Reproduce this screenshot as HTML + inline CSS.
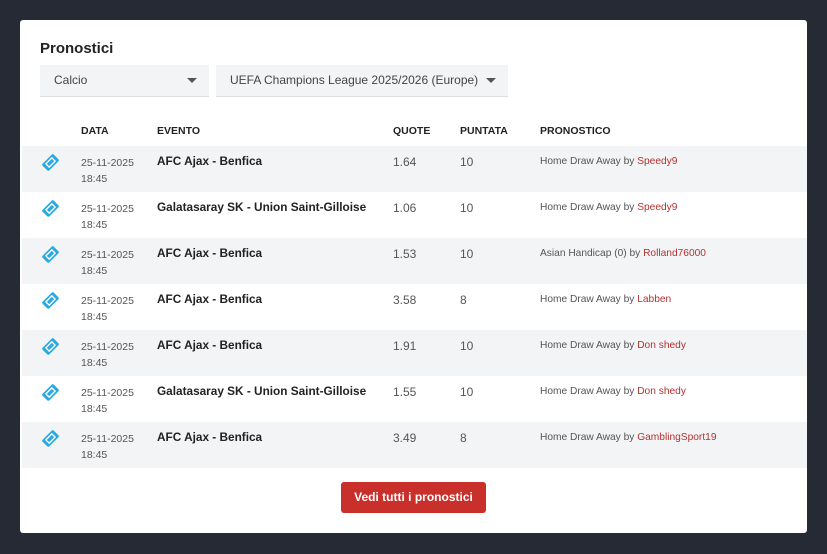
<!DOCTYPE html>
<html><head><meta charset="utf-8"><style>
*{box-sizing:border-box;margin:0;padding:0}
body{width:827px;height:554px;background:#262a34;font-family:"Liberation Sans",sans-serif;position:relative;overflow:hidden}
.card{position:absolute;left:20px;top:20px;width:787px;height:513px;background:#fff;border-radius:3px}
h2{position:absolute;left:20px;top:20px;font-size:15px;font-weight:bold;color:#222}
.sel{position:absolute;top:45px;height:32px;background:#f3f4f6;border-bottom:1px solid #dcdde0;font-size:12px;color:#444;line-height:31px;padding-left:14px}
.sel:after{content:"";position:absolute;right:12px;top:13px;border-left:5px solid transparent;border-right:5px solid transparent;border-top:5px solid #555}
.th{position:absolute;top:105px;font-size:10.5px;font-weight:bold;color:#222}
.row{position:absolute;left:2px;width:785px;height:46px}
.row.g{background:#f3f4f6}
.row div{position:absolute}
.ic{left:18px;top:6px}
.dt{left:59px;top:9px;font-size:10.5px;color:#555;line-height:16px}
.ev{left:135px;top:8px;font-size:11.8px;font-weight:bold;color:#222}
.q{left:371px;top:9px;font-size:12px;color:#555}
.p{left:438px;top:9px;font-size:12px;color:#555}
.pr{left:518px;top:10px;font-size:10.2px;color:#555}
.pr span{color:#b3322f}
.btn{position:absolute;left:321px;top:462px;width:145px;height:31px;background:#c9302c;border-radius:3px;color:#fff;font-weight:bold;font-size:12px;text-align:center;line-height:31px}
</style></head><body>
<svg width="0" height="0" style="position:absolute"><defs><symbol id="t" viewBox="0 0 20 20"><g transform="rotate(-45 10 10)"><rect x="2.5" y="5.5" width="15" height="9" rx="1.5" fill="#2aa8e0"/><rect x="6" y="7.8" width="8" height="4.4" fill="none" stroke="#fff" stroke-width="1.3"/></g></symbol></defs></svg>
<div class="card">
<h2>Pronostici</h2>
<div class="sel" style="left:20px;width:169px">Calcio</div>
<div class="sel" style="left:196px;width:292px">UEFA Champions League 2025/2026 (Europe)</div>
<div class="th" style="left:61px">DATA</div>
<div class="th" style="left:137px">EVENTO</div>
<div class="th" style="left:373px">QUOTE</div>
<div class="th" style="left:440px">PUNTATA</div>
<div class="th" style="left:520px">PRONOSTICO</div>

<div class="row g" style="top:126px"><div class="ic"><svg width="21" height="21"><use href="#t"/></svg></div><div class="dt">25-11-2025<br>18:45</div><div class="ev">AFC Ajax - Benfica</div><div class="q">1.64</div><div class="p">10</div><div class="pr">Home Draw Away by <span>Speedy9</span></div></div>
<div class="row" style="top:172px"><div class="ic"><svg width="21" height="21"><use href="#t"/></svg></div><div class="dt">25-11-2025<br>18:45</div><div class="ev">Galatasaray SK - Union Saint-Gilloise</div><div class="q">1.06</div><div class="p">10</div><div class="pr">Home Draw Away by <span>Speedy9</span></div></div>
<div class="row g" style="top:218px"><div class="ic"><svg width="21" height="21"><use href="#t"/></svg></div><div class="dt">25-11-2025<br>18:45</div><div class="ev">AFC Ajax - Benfica</div><div class="q">1.53</div><div class="p">10</div><div class="pr">Asian Handicap (0) by <span>Rolland76000</span></div></div>
<div class="row" style="top:264px"><div class="ic"><svg width="21" height="21"><use href="#t"/></svg></div><div class="dt">25-11-2025<br>18:45</div><div class="ev">AFC Ajax - Benfica</div><div class="q">3.58</div><div class="p">8</div><div class="pr">Home Draw Away by <span>Labben</span></div></div>
<div class="row g" style="top:310px"><div class="ic"><svg width="21" height="21"><use href="#t"/></svg></div><div class="dt">25-11-2025<br>18:45</div><div class="ev">AFC Ajax - Benfica</div><div class="q">1.91</div><div class="p">10</div><div class="pr">Home Draw Away by <span>Don shedy</span></div></div>
<div class="row" style="top:356px"><div class="ic"><svg width="21" height="21"><use href="#t"/></svg></div><div class="dt">25-11-2025<br>18:45</div><div class="ev">Galatasaray SK - Union Saint-Gilloise</div><div class="q">1.55</div><div class="p">10</div><div class="pr">Home Draw Away by <span>Don shedy</span></div></div>
<div class="row g" style="top:402px"><div class="ic"><svg width="21" height="21"><use href="#t"/></svg></div><div class="dt">25-11-2025<br>18:45</div><div class="ev">AFC Ajax - Benfica</div><div class="q">3.49</div><div class="p">8</div><div class="pr">Home Draw Away by <span>GamblingSport19</span></div></div>

<div class="btn">Vedi tutti i pronostici</div>
</div>
</body></html>
